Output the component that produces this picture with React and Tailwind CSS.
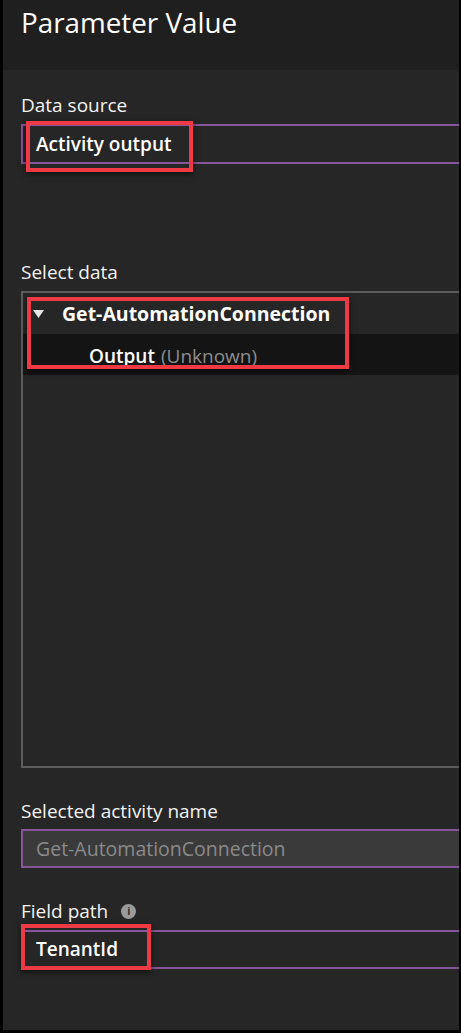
const font = { fontFamily: '"Open Sans", "Liberation Sans", sans-serif' };

const RedBox = ({ className }) => (
  <div
    className={`absolute border-[4px] border-[#ee3a44] shadow-[0_2px_6px_rgba(0,0,0,0.6)] ${className}`}
  />
);

const Label = ({ children, className = "" }) => (
  <div className={`text-[19px] leading-[24px] text-[#f2f2f2] ${className}`}>
    {children}
  </div>
);

const InfoIcon = () => (
  <span className="ml-[13px] inline-flex h-[15px] w-[15px] items-center justify-center rounded-full bg-[#9a9a9a] text-[10px] font-bold leading-none text-[#2a2a2a]">
    i
  </span>
);

export default function App() {
  return (
    <div
      style={font}
      className="relative h-[1033px] w-[461px] overflow-hidden border-l-[3px] border-r-[2px] border-b-[3px] border-black bg-[#262626]"
    >
      {/* header */}
      <div className="h-[70px] bg-[#1f1f1f] pl-[18px] pt-[2px]">
        <h1 className="text-[27.8px] leading-[40px] text-white">Parameter Value</h1>
      </div>

      <div className="pl-[18px]">
        <Label className="mt-[23px]">Data source</Label>
        <div className="mt-[7px] flex h-[40px] items-center border-y-2 border-l-2 border-[#86559a] pl-[13px]">
          <span className="text-[19px] font-semibold text-white">Activity output</span>
        </div>

        <Label className="mt-[96px]">Select data</Label>
        <div className="mt-[7px] h-[477px] border-2 border-r-0 border-[#5c5c5c]">
          <div className="flex h-[41px] items-center pl-[10px]">
            <svg width="11" height="8" viewBox="0 0 11 8" className="mr-[18px]">
              <path d="M0 0 L11 0 L5.5 8 Z" fill="#e6e6e6" />
            </svg>
            <span className="text-[19.5px] font-bold text-white">Get-AutomationConnection</span>
          </div>
          <div className="flex h-[41px] items-center bg-[#141414] pl-[66px] pt-[4px]">
            <span className="text-[19px] font-semibold text-white">Output</span>
            <span className="ml-[6px] text-[19px] text-[#8c8c8c]">(Unknown)</span>
          </div>
        </div>

        <Label className="mt-[31px]">Selected activity name</Label>
        <div className="mt-[6px] flex h-[39px] items-center border-y-2 border-l-2 border-[#86559a] bg-[#3a3a3a] pl-[13px]">
          <span className="text-[19.5px] text-[#8a8a8a]">Get-AutomationConnection</span>
        </div>

        <Label className="mt-[31px] flex items-center">
          Field path
          <InfoIcon />
        </Label>
        <div className="mt-[7px] flex h-[39px] items-center border-y-2 border-[#86559a] pl-[15px]">
          <span className="text-[19px] font-semibold text-white">TenantId</span>
        </div>
      </div>

      {/* annotations */}
      <RedBox className="left-[23px] top-[121px] h-[51px] w-[167px]" />
      <RedBox className="left-[24px] top-[297px] h-[72px] w-[322px]" />
      <RedBox className="left-[18px] top-[924px] h-[46px] w-[130px]" />
    </div>
  );
}
